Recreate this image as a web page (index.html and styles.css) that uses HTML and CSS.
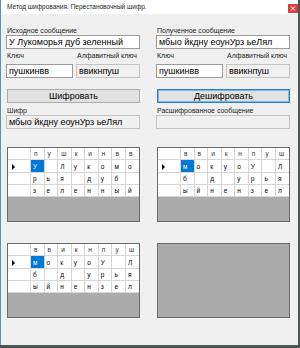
FILE: index.html
```html
<!DOCTYPE html>
<html lang="ru">
<head>
    <meta charset="UTF-8">
    <meta name="viewport" content="width=device-width, initial-scale=1.0">
    <title>Метод шифрования</title>
    <link rel="stylesheet" href="styles.css">
</head>
<body>
    <div class="window">
        <div class="titlebar">
            <span class="title">Метод шифрования. Перестановочный шифр.</span>
            <span class="close">
                <svg width="10" height="9" viewBox="0 0 10 9"><path d="M3 2.5l4 4M7 2.5l-4 4" stroke="#fff" stroke-width="1" fill="none"/></svg>
            </span>
        </div>
        <div class="content">
            <div class="columns">
                <div class="panel">
                    <div class="caption">Исходное сообщение</div>
                    <input class="field" type="text" value="У Лукоморья дуб зеленный">
                    <div class="keys">
                        <div>
                            <div class="caption">Ключ</div>
                            <input class="field" type="text" value="пушкинвв">
                        </div>
                        <div>
                            <div class="caption">Алфавитный ключ</div>
                            <input class="field readonly" type="text" value="ввикнпуш" readonly>
                        </div>
                    </div>
                    <button class="btn">Шифровать</button>
                    <div class="caption">Шифр</div>
                    <input class="field readonly" type="text" value="мбыо йкдну еоунУрз ьеЛял" readonly>
                </div>
                <div class="panel">
                    <div class="caption">Полученное сообщение</div>
                    <input class="field" type="text" value="мбыо йкдну еоунУрз ьеЛял">
                    <div class="keys">
                        <div>
                            <div class="caption">Ключ</div>
                            <input class="field" type="text" value="пушкинвв">
                        </div>
                        <div>
                            <div class="caption">Алфавитный ключ</div>
                            <input class="field readonly" type="text" value="ввикнпуш" readonly>
                        </div>
                    </div>
                    <button class="btn focused">Дешифровать</button>
                    <div class="caption">Расшифрованное сообщение</div>
                    <input class="field readonly" type="text" value="" readonly>
                </div>
            </div>

            <div class="grids">
                <div class="grid">
                    <table>
                        <tr class="head"><td></td><td>п</td><td>у</td><td>ш</td><td>к</td><td>и</td><td>н</td><td>в</td><td>в</td></tr>
                        <tr class="first"><td><span class="arrow"></span></td><td class="sel">У</td><td></td><td>Л</td><td>у</td><td>к</td><td>о</td><td>м</td><td>о</td></tr>
                        <tr><td></td><td>р</td><td>ь</td><td>я</td><td></td><td>д</td><td>у</td><td>б</td><td></td></tr>
                        <tr><td></td><td>з</td><td>е</td><td>л</td><td>е</td><td>н</td><td>н</td><td>ы</td><td>й</td></tr>
                    </table>
                </div>
                <div class="grid">
                    <table>
                        <tr class="head"><td></td><td>в</td><td>в</td><td>и</td><td>к</td><td>н</td><td>п</td><td>у</td><td>ш</td></tr>
                        <tr class="first"><td><span class="arrow"></span></td><td class="sel">м</td><td>о</td><td>к</td><td>у</td><td>о</td><td>У</td><td></td><td>Л</td></tr>
                        <tr><td></td><td>б</td><td></td><td>д</td><td></td><td>у</td><td>р</td><td>ь</td><td>я</td></tr>
                        <tr><td></td><td>ы</td><td>й</td><td>н</td><td>е</td><td>н</td><td>з</td><td>е</td><td>л</td></tr>
                    </table>
                </div>
                <div class="grid">
                    <table>
                        <tr class="head"><td></td><td>в</td><td>в</td><td>и</td><td>к</td><td>н</td><td>п</td><td>у</td><td>ш</td></tr>
                        <tr class="first"><td><span class="arrow"></span></td><td class="sel">м</td><td>о</td><td>к</td><td>у</td><td>о</td><td>У</td><td></td><td>Л</td></tr>
                        <tr><td></td><td>б</td><td></td><td>д</td><td></td><td>у</td><td>р</td><td>ь</td><td>я</td></tr>
                        <tr><td></td><td>ы</td><td>й</td><td>н</td><td>е</td><td>н</td><td>з</td><td>е</td><td>л</td></tr>
                    </table>
                </div>
                <div class="grid"></div>
            </div>
        </div>
    </div>
</body>
</html>
```

FILE: styles.css
```css
body {
    margin: 0;
    width: 300px;
    height: 348px;
    background-color: #4a5552;
    font-family: "Liberation Sans", Arial, sans-serif;
    color: #000;
    overflow: hidden;
}

.window {
    box-sizing: border-box;
    width: 298px;
    height: 345px;
    background-color: #f0f0f0;
    border-left: 1px solid #5e93a6;
}

.titlebar {
    display: flex;
    justify-content: space-between;
    align-items: flex-start;
    height: 14px;
    background-color: #fff;
}

.title {
    padding-left: 6px;
    font-size: 6.5px;
    line-height: 14px;
    color: #222;
}

.close {
    display: flex;
    margin-top: 4px;
    background-color: #d9413c;
}

.close svg {
    display: block;
}

.content {
    padding: 13px 8px 0 5px;
}

.columns {
    display: grid;
    grid-template-columns: 134px 134px;
    column-gap: 16px;
}

.panel {
    display: flex;
    flex-direction: column;
}

.caption {
    padding-left: 1px;
    font-size: 7px;
    line-height: 8px;
    color: #222;
    white-space: nowrap;
}

.field {
    box-sizing: border-box;
    width: 100%;
    height: 14px;
    margin: 0;
    padding: 0 2px;
    border: 1px solid #9a9a9a;
    background-color: #fff;
    font-family: "Liberation Sans", Arial, sans-serif;
    font-size: 9px;
    color: #000;
    outline: none;
}

.field.readonly {
    border-color: #c4c4c4;
    background-color: #f0f0f0;
}

.keys {
    display: grid;
    grid-template-columns: 67px 64px;
    column-gap: 3px;
    margin-top: 3px;
}

.btn {
    box-sizing: border-box;
    height: 14px;
    margin: 11px 0 4px 1px;
    padding: 0;
    border: 1px solid #adadad;
    background-color: #e1e1e1;
    font-family: "Liberation Sans", Arial, sans-serif;
    font-size: 9px;
    color: #000;
}

.btn.focused {
    border-color: #2a7fd4;
    box-shadow: inset 0 0 0 1px #7db3e8;
}

.grids {
    display: grid;
    grid-template-columns: 133px 133px;
    grid-template-rows: 75px 75px;
    column-gap: 17px;
    row-gap: 21px;
    margin: 18px 0 0 1px;
}

.grid {
    box-sizing: border-box;
    border: 1px solid #6a6a6a;
    background-color: #ababab;
    overflow: hidden;
}

.grid table {
    width: 131px;
    table-layout: fixed;
    border-collapse: collapse;
    background-color: #fff;
}

.grid td {
    height: 11px;
    padding: 0 0 0 2px;
    border: 1px solid #d6d6d6;
    font-size: 6.5px;
    line-height: 9px;
    white-space: nowrap;
    overflow: hidden;
}

.grid td:first-child {
    width: 19px;
    border-left: none;
}

.grid td:last-child {
    border-right: none;
}

.grid tr.head td {
    border-top: none;
    padding-left: 3px;
    color: #333;
}

.grid tr.first td {
    height: 12px;
}

.grid td.sel {
    background-color: #0078d7;
    color: #fff;
}

.arrow {
    display: inline-block;
    margin-left: 2px;
    border-left: 3px solid #000;
    border-top: 3px solid transparent;
    border-bottom: 3px solid transparent;
    vertical-align: middle;
}
```
